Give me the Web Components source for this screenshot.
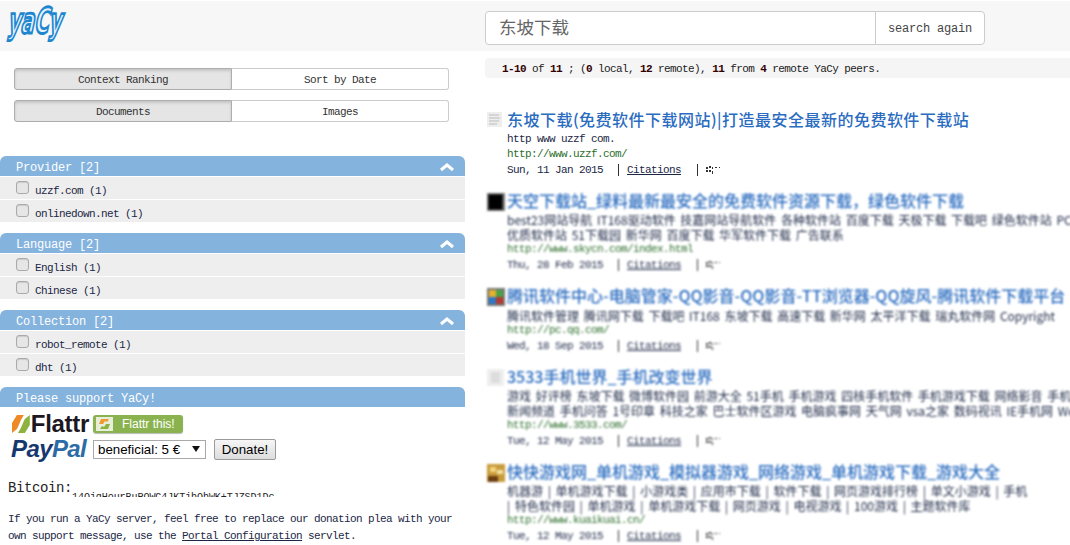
<!DOCTYPE html>
<html>
<head>
<meta charset="utf-8">
<title>YaCy</title>
<style>
  html, body { margin: 0; height: 545px; overflow: hidden; background: #fff; }
  body { font: 11px/15px "Liberation Mono", "Noto Sans CJK SC", monospace; color: #1b2745; }
</style>
</head>
<body>
<yc-app>
  <yc-header slot="header"></yc-header>

  <yc-toggle slot="side" first="Context Ranking" second="Sort by Date"></yc-toggle>
  <yc-toggle slot="side" first="Documents" second="Images"></yc-toggle>

  <yc-panel slot="side" heading="Provider [2]" class="first" collapsible>
    <yc-facet>uzzf.com (1)</yc-facet>
    <yc-facet>onlinedown.net (1)</yc-facet>
  </yc-panel>
  <yc-panel slot="side" heading="Language [2]" collapsible>
    <yc-facet>English (1)</yc-facet>
    <yc-facet>Chinese (1)</yc-facet>
  </yc-panel>
  <yc-panel slot="side" heading="Collection [2]" collapsible>
    <yc-facet>robot_remote (1)</yc-facet>
    <yc-facet>dht (1)</yc-facet>
  </yc-panel>
  <yc-panel slot="side" heading="Please support YaCy!">
    <yc-donate></yc-donate>
  </yc-panel>

  <yc-stats slot="main"></yc-stats>

  <yc-result slot="main" class="first" icon="doc" date="Sun, 11 Jan 2015" url="http://www.uzzf.com/">
    <span slot="title" style="letter-spacing: .48px">东坡下载(免费软件下载网站)|打造最安全最新的免费软件下载站</span>
    http www uzzf com.
  </yc-result>
  <yc-result slot="main" blurred lines="2" icon="black" date="Thu, 28 Feb 2015" url="http://www.skycn.com/index.html">
    <span slot="title">天空下载站_绿料最新最安全的免费软件资源下载，绿色软件下载</span>
    best23网站导航 IT168驱动软件 技嘉网站导航软件 各种软件站 百度下载 天极下载 下载吧 绿色软件站 PCHome<br>
    优质软件站 51下载园 新华网 百度下载 华军软件下载 广告联系
  </yc-result>
  <yc-result slot="main" blurred icon="color" date="Wed, 18 Sep 2015" url="http://pc.qq.com/">
    <span slot="title">腾讯软件中心-电脑管家-QQ影音-QQ影音-TT浏览器-QQ旋风-腾讯软件下载平台</span>
    腾讯软件管理 腾讯网下载 下载吧 IT168 东坡下载 高速下载 新华网 太平洋下载 瑞丸软件网 Copyright
  </yc-result>
  <yc-result slot="main" blurred lines="2" icon="faint" date="Tue, 12 May 2015" url="http://www.3533.com/">
    <span slot="title">3533手机世界_手机改变世界</span>
    游戏 好评榜 东坡下载 微博软件园 前游大全 51手机 手机游戏 四核手机软件 手机游戏下载 网络影音 手机<br>
    新闻频道 手机问答 1号印章 科技之家 巴士软件区游戏 电脑疯事网 天气网 vsa之家 数码视讯 IE手机网 WebKit
  </yc-result>
  <yc-result slot="main" blurred lines="2" icon="game" date="Tue, 12 May 2015" url="http://www.kuaikuai.cn/">
    <span slot="title">快快游戏网_单机游戏_模拟器游戏_网络游戏_单机游戏下载_游戏大全</span>
    机器游 | 单机游戏下载 | 小游戏类 | 应用市下载 | 软件下载 | 网页游戏排行榜 | 单文小游戏 | 手机<br>
    | 特色软件园 | 单机游戏 | 单机游戏下载 | 网页游戏 | 电视游戏 | 100游戏 | 主题软件库
  </yc-result>
</yc-app>

<script>
  // outer frame: header on top, sidebar and results below
  class YcApp extends HTMLElement {
    constructor() {
      super();
      this.attachShadow({ mode: "open" });
      this.shadowRoot.innerHTML = /* html */`
      <style>
        :host { display: block; width: 1070px; height: 545px; overflow: hidden; }
        .cols { display: grid; grid-template-columns: 465px 585px; column-gap: 20px; }
        .side, .main { display: flex; flex-direction: column; min-width: 0; overflow: hidden; height: 494px; }
      </style>
      <slot name="header"></slot>
      <div class="cols">
        <div class="side"><slot name="side"></slot></div>
        <div class="main"><slot name="main"></slot></div>
      </div>`;
    }
  }

  class YcHeader extends HTMLElement {
    constructor() {
      super();
      this.attachShadow({ mode: "open" });
      this.shadowRoot.innerHTML = /* html */`
      <style>
        :host { display: block; height: 50px; margin-top: 1px; background: #f7f7f7; }
        .bar { display: grid; grid-template-columns: 465px 500px; column-gap: 20px; height: 50px; }
        .logo { padding: 3px 0 0 4px; }
        svg { display: block; overflow: visible; }
        text { font: 700 29px "DejaVu Sans", sans-serif; fill: #e6f3fc; stroke: #1f87d0; stroke-width: 2.3px; }
        form { display: flex; margin: 10px 0 0; height: 34px; box-sizing: border-box; border: 1px solid #ccc; border-radius: 4px; background: #fff; overflow: hidden; }
        .q { flex: 1; padding-left: 13px; font: 17.5px/30px "Noto Sans CJK SC", sans-serif; color: #666; }
        .go { width: 108px; border-left: 1px solid #ccc; text-align: center; font: 12px/34px "Liberation Mono", monospace; letter-spacing: -.2px; color: #444; }
      </style>
      <div class="bar">
        <div class="logo">
          <svg width="64" height="42" viewBox="0 0 64 42">
            <g transform="translate(3 29) skewX(-12) scale(1 1.22)">
              <text x="0" y="0" textLength="54" lengthAdjust="spacingAndGlyphs">yaCy</text>
            </g>
          </svg>
        </div>
        <form>
          <div class="q">东坡下载</div>
          <div class="go">search again</div>
        </form>
      </div>`;
    }
  }

  class YcToggle extends HTMLElement {
    constructor() {
      super();
      this.attachShadow({ mode: "open" });
    }

    connectedCallback() {
      this.shadowRoot.innerHTML = /* html */`
      <style>
        :host { display: flex; height: 22px; margin: 17px 16px -7px 14px; font: 11px/22px "Liberation Mono", monospace; letter-spacing: -.6px; color: #333; }
        div { box-sizing: border-box; text-align: center; border: 1px solid #ccc; background: #fff; }
        .on { width: 218px; background: #e5e5e5; border-color: #adadad; border-radius: 3px 0 0 3px; box-shadow: inset 0 2px 3px rgba(0,0,0,.14); }
        .off { flex: 1; border-left: 0; border-radius: 0 3px 3px 0; }
      </style>
      <div class="on">${this.getAttribute("first")}</div>
      <div class="off">${this.getAttribute("second")}</div>`;
    }
  }

  class YcPanel extends HTMLElement {
    constructor() {
      super();
      this.attachShadow({ mode: "open" });
    }

    connectedCallback() {
      const arrow = this.hasAttribute("collapsible")
        ? `<svg width="14" height="9" viewBox="0 0 14 9"><path d="M1 7 7 2l6 5" fill="none" stroke="#fff" stroke-width="3"/></svg>`
        : "";
      this.shadowRoot.innerHTML = /* html */`
      <style>
        :host { display: block; width: 465px; margin-top: 10px; }
        :host(.first) { margin-top: 41px; }
        h3 { display: flex; justify-content: space-between; align-items: center; box-sizing: border-box; height: 20px; margin: 0 0 1px; padding: 5px 11px 0 16px;
             background: #84b3de; border-radius: 6px 6px 0 0; color: #fff; font: 400 12px/15px "Liberation Mono", monospace; letter-spacing: -.2px; }
        svg { margin-bottom: 2px; }
      </style>
      <h3><span>${this.getAttribute("heading")}</span>${arrow}</h3>
      <slot></slot>`;
    }
  }

  class YcFacet extends HTMLElement {
    constructor() {
      super();
      this.attachShadow({ mode: "open" });
      this.shadowRoot.innerHTML = /* html */`
      <style>
        :host { display: flex; height: 22px; margin-bottom: 1px; background: #eee; font: 11px/29px "Liberation Mono", monospace; letter-spacing: -.6px; color: #1b2745; }
        i { box-sizing: border-box; flex: none; width: 13px; height: 13px; margin: 4px 6px 0 16px; border: 1px solid #aaa; border-radius: 3px; background: #e6e6e6; box-shadow: inset 0 1px 1px rgba(0,0,0,.12); }
      </style>
      <i></i><slot></slot>`;
    }
  }

  class YcDonate extends HTMLElement {
    constructor() {
      super();
      this.attachShadow({ mode: "open" });
      this.shadowRoot.innerHTML = /* html */`
      <style>
        :host { display: block; padding-top: 7px; }
        .row { display: flex; align-items: center; gap: 4px; margin-left: 12px; }
        .flattr { height: 18px; }
        .brand { display: flex; align-items: center; gap: 1px; width: 77px; font: 700 24px/18px "Liberation Sans", sans-serif; letter-spacing: -.3px; color: #1c1722; }
        .ftr { display: flex; align-items: center; width: 90px; height: 18px; box-sizing: border-box; padding-left: 3px; border-radius: 3px; background: #8ab34f; box-shadow: 0 1px 1px #bbb;
               font: 12px/18px "Liberation Sans", sans-serif; color: #fff; }
        .ftr svg { margin-right: 9px; background: #e8efd9; }
        .pay { height: 24px; margin: 4px 0 0 11px; gap: 6px; }
        .pp { width: 76px; font: italic 700 24px/24px "Liberation Sans", sans-serif; letter-spacing: -.6px; color: #15386f; }
        .pp b { color: #2d6ba5; }
        .pick { position: relative; width: 113px; height: 19px; margin-right: 2px; }
        .pick::after { content: ""; position: absolute; right: 6px; top: 6px; border: 4px solid transparent; border-top: 6px solid #111; border-bottom: 0; pointer-events: none; }
        select { appearance: none; display: block; box-sizing: border-box; width: 100%; height: 100%; padding: 0 0 0 4px; border: 1px solid #a9a9a9; border-radius: 0; background: #fff; font: 13.3px "Liberation Sans", sans-serif; color: #000; }
        button { width: 62px; height: 21px; padding: 0; border: 1px solid #9a9a9a; border-radius: 2px; background: linear-gradient(#f6f6f6, #ddd); font: 13.3px "Liberation Sans", sans-serif; color: #000; }
        .btc { display: flex; align-items: flex-start; height: 19px; margin: 17px 0 0 8px; overflow: hidden; font: 14px/21px "Liberation Mono", monospace; letter-spacing: -.4px; color: #222; }
        .btc span { margin-top: 15px; font-size: 10px; line-height: 10px; letter-spacing: -.05px; }
        p { margin: 14px 0 0 8px; font: 11px/17px "Liberation Mono", monospace; letter-spacing: -.6px; color: #1b2745; white-space: nowrap; }
        a { color: inherit; text-decoration: underline; }
      </style>
      <div class="row flattr">
        <div class="brand">
          <svg width="18" height="18" viewBox="0 0 18 18">
            <path d="M5 0h7L9 5 6 12l-1 2-5 4H0V8z" fill="#ee8a26"/>
            <path d="M13 18H6l3-5 3-7 1-2 5-4v10z" fill="#8db23e"/>
          </svg>
          <span>Flattr</span>
        </div>
        <div class="ftr">
          <svg width="17" height="14" viewBox="0 0 17 14">
            <path d="M5 2h8l-2 3-2-1-2 3H3z" fill="#ee9a2e"/>
            <path d="M12 12H4l2-3 2 1 2-3h4z" fill="#8cb33f"/>
          </svg>
          Flattr this!
        </div>
      </div>
      <div class="row pay">
        <div class="pp">Pay<b>Pal</b></div>
        <div class="pick"><select><option>beneficial: 5 €</option></select></div>
        <button type="button">Donate!</button>
      </div>
      <div class="btc">Bitcoin:<span>14QjgHourBuPQWC4JKTjbQbWK+TJZSD1Dc</span></div>
      <p>If you run a YaCy server, feel free to replace our donation plea with your<br>own support message, use the <a href="#">Portal Configuration</a> servlet.</p>`;
    }
  }

  class YcStats extends HTMLElement {
    constructor() {
      super();
      this.attachShadow({ mode: "open" });
      this.shadowRoot.innerHTML = /* html */`
      <style>
        :host { display: block; flex: none; height: 20px; margin-top: 7px; padding-left: 17px; background: #f5f5f5; border-radius: 4px 0 0 4px;
                font: 11px/22px "Liberation Mono", monospace; letter-spacing: -.6px; color: #222; }
        b { color: #300; }
      </style>
      <b>1-10</b> of <b>11</b> ; (<b>0</b> local, <b>12</b> remote), <b>11</b> from <b>4</b> remote YaCy peers.`;
    }
  }

  const ICONS = {
    doc: `<rect width="15" height="15" fill="#eee"/><path d="M2 3h10M2 6h11M2 9h10M2 12h8" stroke="#bbb"/>`,
    black: `<rect width="18" height="18" fill="#777"/><rect x="1.5" y="1.5" width="14" height="15" fill="#000"/>`,
    color: `<rect width="18" height="18" fill="#777"/><rect x="2" y="2" width="7" height="7" fill="#e5b22c"/><rect x="9" y="2" width="7" height="7" fill="#4aa14a"/><rect x="2" y="9" width="7" height="7" fill="#2b78c8"/><rect x="9" y="9" width="7" height="7" fill="#b5392f"/>`,
    faint: `<rect width="17" height="17" fill="#eee"/><rect x="4" y="3" width="9" height="11" fill="#ddd"/>`,
    game: `<rect width="18" height="18" fill="#c89b3c"/><rect x="3" y="3" width="6" height="5" fill="#f4d67c"/><rect x="10" y="6" width="6" height="4" fill="#f6e4a8"/><rect x="1" y="12" width="10" height="6" fill="#6b3d10"/>`
  };

  class YcResult extends HTMLElement {
    constructor() {
      super();
      this.attachShadow({ mode: "open" });
    }

    connectedCallback() {
      const icon = this.getAttribute("icon");
      this.shadowRoot.innerHTML = /* html */`
      <style>
        :host { display: block; flex: none; position: relative; margin: 13px 0 0 2px; padding-left: 20px; white-space: nowrap; }
        :host(.first) { margin-top: 32px; }
        :host([blurred]) { filter: blur(1px); }
        .ico { position: absolute; left: 0; top: 2px; display: block; }
        h4 { margin: -1px 0 3px; font: 500 16px/20px "Noto Sans CJK SC", sans-serif; color: #2a6cc0; }
        .snip { font: 11px/15px "Liberation Mono", "Noto Sans CJK SC", monospace; letter-spacing: -.6px; color: #1b2745; }
        :host([blurred]) .snip { font: 12px/15px "Noto Sans CJK SC", sans-serif; letter-spacing: 0; word-spacing: 2px; }
        :host([lines="2"]) .snip { line-height: 14.5px; }
        .url { margin-top: -1px; font: 11px/16px "Liberation Mono", monospace; letter-spacing: -.6px; color: #2c6e2c; }
        .meta { display: flex; align-items: center; height: 16px; font: 11px/16px "Liberation Mono", monospace; letter-spacing: -.6px; color: #1b2745; }
        .date { width: 111px; }
        .sep { width: 1px; height: 12px; margin: 0 8px 0 0; background: #333; }
        u { width: 70px; }
      </style>
      <svg class="ico" width="18" height="18" viewBox="0 0 18 18">${ICONS[icon]}</svg>
      <h4><slot name="title"></slot></h4>
      <div class="snip"><slot></slot></div>
      <div class="url">${this.getAttribute("url")}</div>
      <div class="meta">
        <span class="date">${this.getAttribute("date")}</span>
        <span class="sep"></span>
        <u>Citations</u>
        <span class="sep"></span>
        <svg width="15" height="9" viewBox="0 0 15 9"><path d="M0 1h2v2H0zM3 0h2v2H3zM0 4h2v2H0zM3 4h2v2H3zM6 1h1v2H6zM6 5h1v3H6zM9 1h2v1H9zM13 1h1v1h-1z" fill="#333"/></svg>
      </div>`;
    }
  }

  customElements.define("yc-app", YcApp);
  customElements.define("yc-header", YcHeader);
  customElements.define("yc-toggle", YcToggle);
  customElements.define("yc-panel", YcPanel);
  customElements.define("yc-facet", YcFacet);
  customElements.define("yc-donate", YcDonate);
  customElements.define("yc-stats", YcStats);
  customElements.define("yc-result", YcResult);
</script>
</body>
</html>
